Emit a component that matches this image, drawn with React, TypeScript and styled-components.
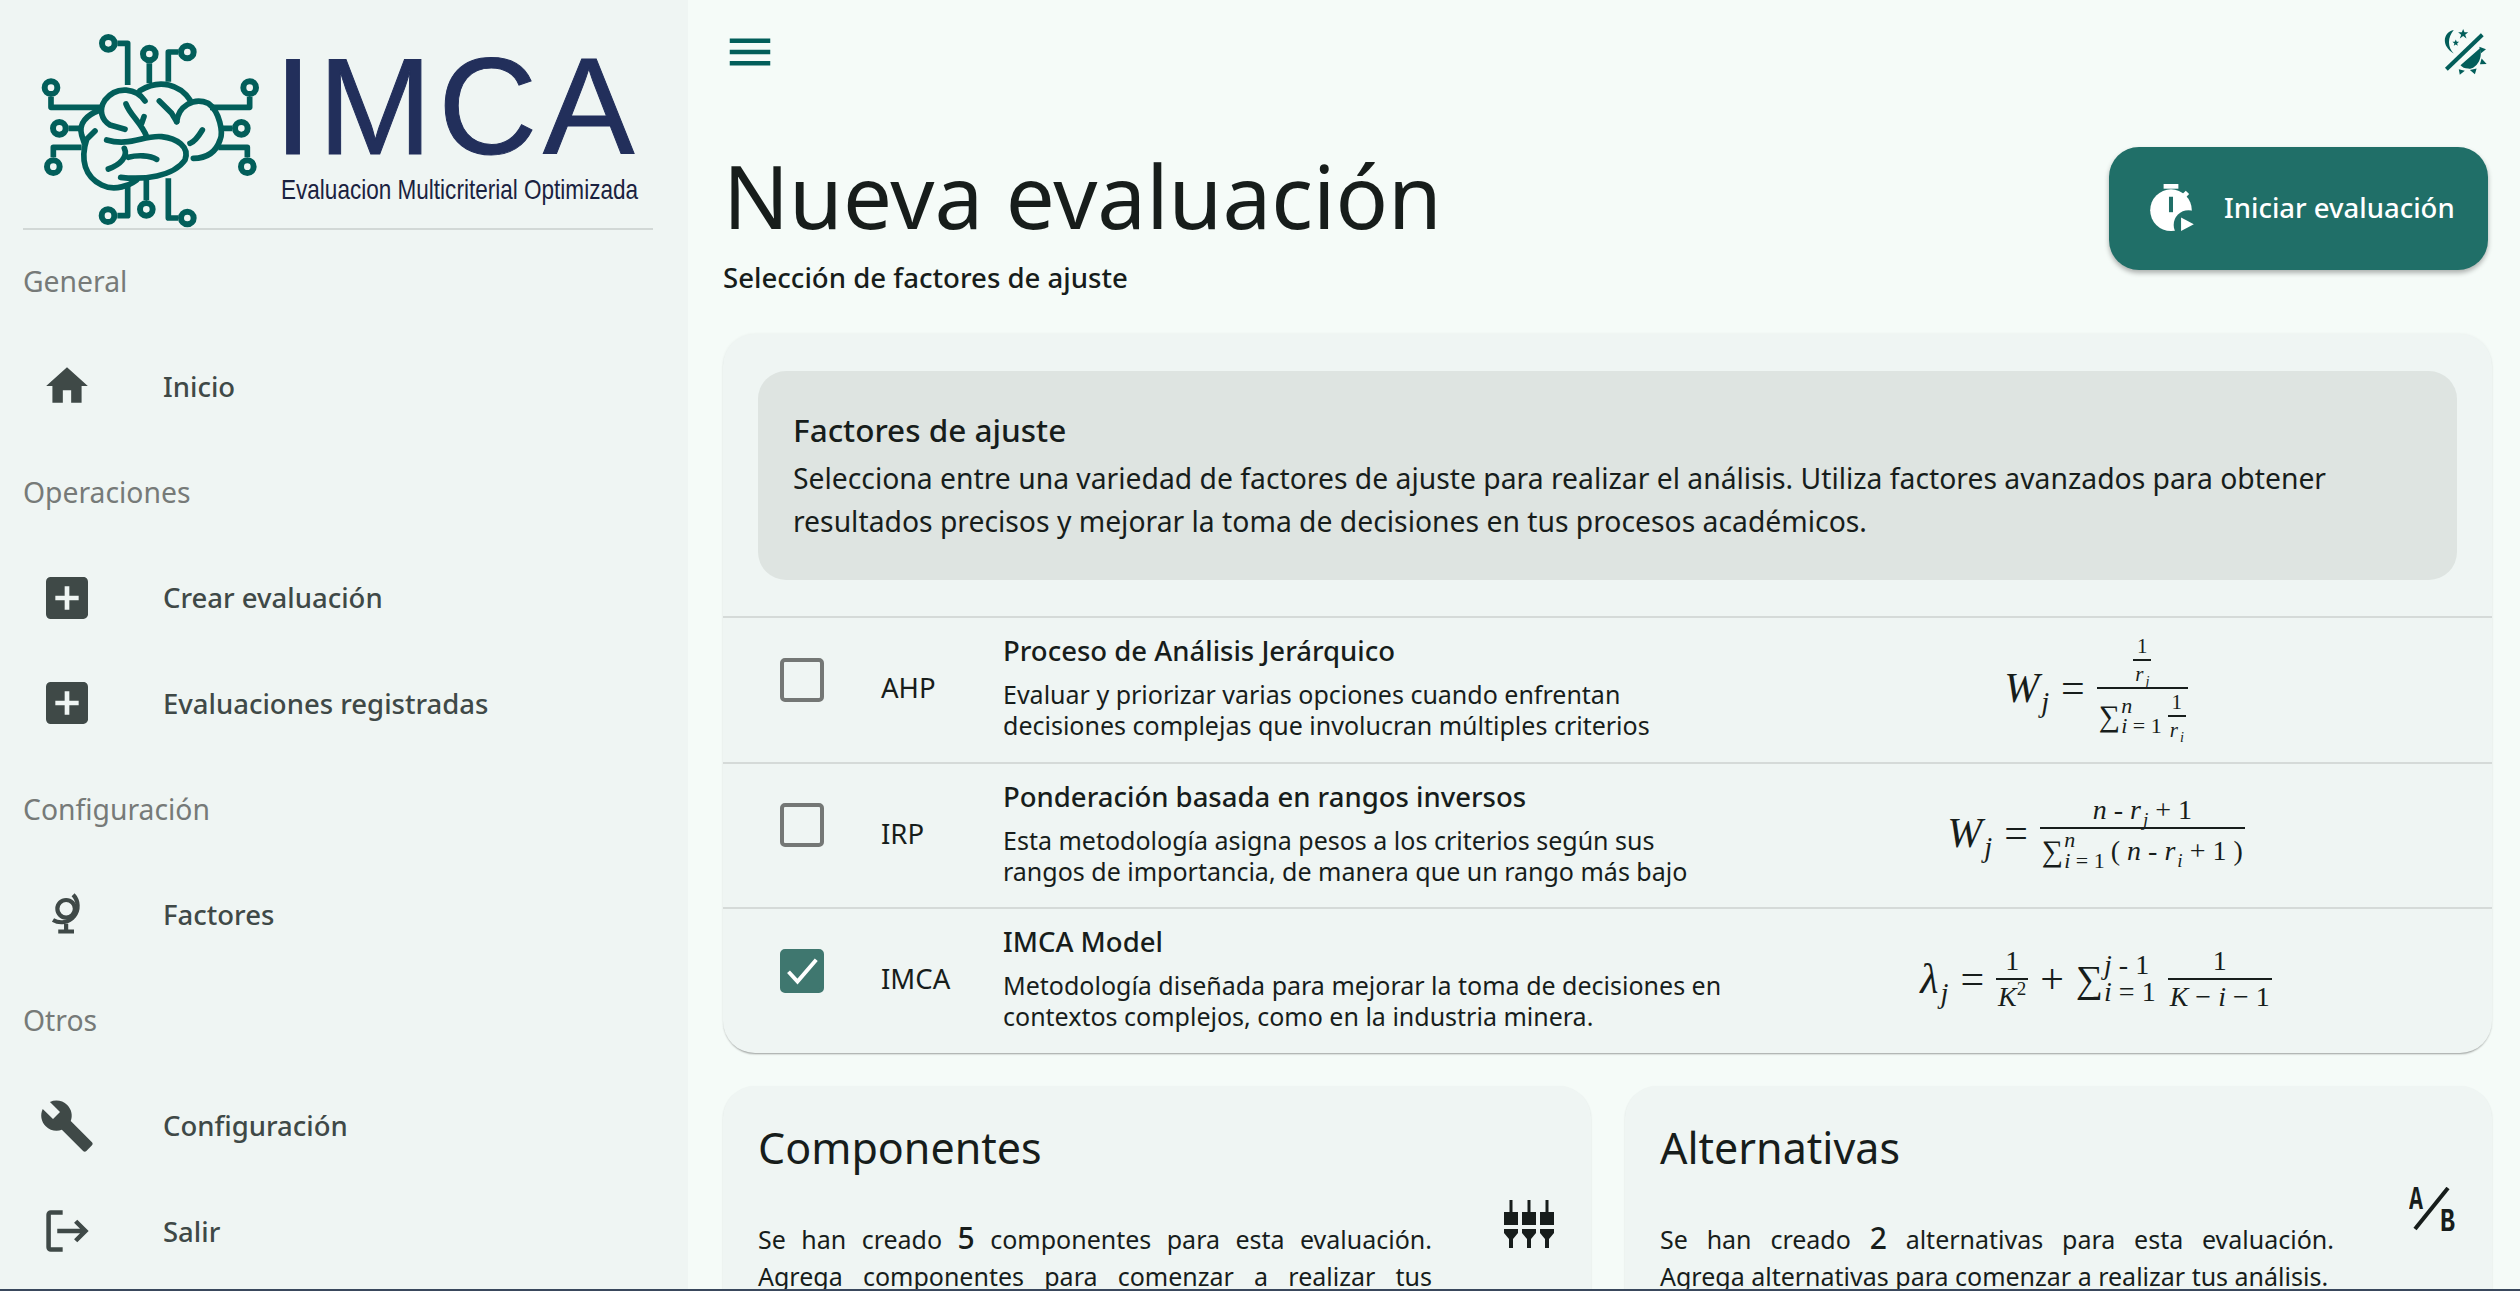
import { ReactNode } from 'react';
import styled, { createGlobalStyle } from 'styled-components';
import { MdAddBox, MdBuild, MdHome, MdMenu } from 'react-icons/md';

const GlobalStyle = createGlobalStyle`
  html, body {
    margin: 0;
    height: 100%;
    overflow: hidden;
    background: #f5fbf8;
    color: #171d1b;
    font-family: "Noto Sans", "Open Sans", sans-serif;
  }
  svg {
    flex-shrink: 0;
  }
`;

const Page = styled.div`
  display: flex;
  flex-direction: column;
  height: 1291px;
`;

const Shell = styled.div`
  flex: 1;
  display: flex;
  min-height: 0;
  overflow: hidden;
`;

const BottomEdge = styled.div`
  height: 2px;
  background: #39475c;
`;

const Sidebar = styled.aside`
  width: 688px;
  flex-shrink: 0;
  box-sizing: border-box;
  padding: 0 35px 0 23px;
  background: #eff5f3;
`;

const LogoRow = styled.div`
  display: flex;
  gap: 7px;
  box-sizing: border-box;
  height: 230px;
  padding: 20px 0 0 7px;
  border-bottom: 2px solid #d2d8d6;
`;

const LogoText = styled.div`
  display: flex;
  flex-direction: column;
  color: #222f5b;
  font-family: "Liberation Sans", Arial, sans-serif;
`;

const LogoTitle = styled.div`
  font-size: 137px;
  line-height: 98px;
  height: 98px;
  margin: 38px 0 0 -3px;
  letter-spacing: 6px;
  white-space: nowrap;
  -webkit-text-stroke: 1px #222f5b;
`;

const LogoSub = styled.div`
  margin: 20px 0 0 4px;
  font-size: 28px;
  line-height: 28px;
  color: #1a2240;
  white-space: nowrap;
  transform: scaleX(0.805);
  transform-origin: left center;
`;

const SectionLabel = styled.div`
  display: flex;
  align-items: center;
  box-sizing: border-box;
  height: 105.6px;
  padding-bottom: 3px;
  font-size: 28.3px;
  color: #767a78;
`;

const NavItem = styled.div`
  display: flex;
  align-items: center;
  box-sizing: border-box;
  height: 105.6px;
  padding: 0 0 4px 23px;
  font-size: 27.5px;
  font-weight: 500;
  color: #3f4947;
`;

const NavIcon = styled.span`
  display: flex;
  align-items: center;
  justify-content: center;
  width: 42px;
  height: 42px;
  margin-right: 75px;
  color: #3f4947;
`;

const Main = styled.main`
  flex: 1;
  min-width: 0;
  padding: 0 28px 0 35px;
`;

const Header = styled.header`
  display: flex;
  align-items: center;
  justify-content: space-between;
  box-sizing: border-box;
  height: 102px;
  padding: 2px 5px 0 0;
  color: #025e5a;
`;

const TitleRow = styled.div`
  display: flex;
  justify-content: space-between;
  align-items: flex-start;
  margin: 43px 0 37px;
`;

const Title = styled.h1`
  margin: 0 0 12px 0;
  font-size: 87px;
  line-height: 100px;
  font-weight: 400;
`;

const Subtitle = styled.div`
  font-size: 27.6px;
  line-height: 40px;
  font-weight: 500;
`;

const StartButton = styled.button`
  display: flex;
  align-items: center;
  gap: 30px;
  box-sizing: border-box;
  width: 379px;
  height: 123px;
  margin: 2px 4px 0 0;
  padding: 0 0 3px 41px;
  border: 0;
  border-radius: 30px;
  background: #206f68;
  color: #fff;
  font-family: inherit;
  font-size: 27.5px;
  font-weight: 500;
  white-space: nowrap;
  box-shadow: 0 3px 5px rgba(0, 0, 0, 0.3);
`;

const Card = styled.section`
  padding-top: 37px;
  height: 719px;
  box-sizing: border-box;
  border-radius: 32px;
  background: #eff5f3;
  box-shadow: 0 2px 2px -1px rgba(0, 0, 0, 0.35), 0 0 3px rgba(0, 0, 0, 0.06);
`;

const InfoBox = styled.div`
  box-sizing: border-box;
  height: 209px;
  margin: 0 35px 36px;
  padding: 39px 35px 0;
  border-radius: 28px;
  background: #dee4e1;
`;

const InfoTitle = styled.div`
  font-size: 31.5px;
  line-height: 40px;
  font-weight: 500;
  margin-bottom: 7px;
`;

const InfoText = styled.div`
  font-size: 28.3px;
  line-height: 43px;
`;

const Row = styled.div`
  display: flex;
  align-items: center;
  box-sizing: border-box;
  height: 145.5px;
  padding: 0 0 4px 57px;
  border-top: 2px solid #d5dad8;
`;

const Check = styled.span<{ $checked?: boolean }>`
  display: flex;
  align-items: center;
  justify-content: center;
  flex-shrink: 0;
  box-sizing: border-box;
  width: 44px;
  height: 44px;
  margin-bottom: 16px;
  border: 4px solid ${(p) => (p.$checked ? '#3f776f' : '#747775')};
  border-radius: 5px;
  background: ${(p) => (p.$checked ? '#3f776f' : 'transparent')};
`;

const RowCode = styled.div`
  width: 122px;
  flex-shrink: 0;
  padding-left: 57px;
  font-size: 27.5px;
`;

const RowText = styled.div`
  width: 730px;
  flex-shrink: 0;
`;

const RowTitle = styled.div`
  font-size: 27.5px;
  line-height: 34px;
  font-weight: 500;
  margin-bottom: 11px;
`;

const RowDesc = styled.div`
  font-size: 25px;
  line-height: 31px;
`;

const FormulaCell = styled.div`
  flex: 1;
  display: flex;
  justify-content: center;
  padding-right: 33px;
`;

const Formula = styled.div`
  display: inline-flex;
  align-items: center;
  gap: 12px;
  font-family: "Liberation Serif", "DejaVu Serif", serif;
  font-size: 42px;
  color: #171d1b;
  white-space: nowrap;
`;

const Var = styled.i``;

const Sub = styled.sub`
  margin-left: 2px;
  font-size: 0.68em;
  line-height: 0;
  vertical-align: -0.35em;
`;

const Sup = styled.sup`
  font-size: 0.68em;
  line-height: 0;
  vertical-align: 0.6em;
`;

const Frac = styled.span<{ $size: number }>`
  display: inline-flex;
  flex-direction: column;
  align-items: center;
  font-size: ${(p) => p.$size}px;
  line-height: 1.15;
`;

const Num = styled.span`
  display: block;
  padding: 0 2px 1px;
  text-align: center;
`;

const Den = styled.span`
  display: flex;
  align-items: center;
  justify-content: center;
  align-self: stretch;
  gap: 6px;
  padding: 1px 2px 0;
  border-top: 2px solid #171d1b;
`;

const SumWrap = styled.span`
  display: inline-flex;
  align-items: center;
  gap: 1px;
`;

const SumSign = styled.span<{ $size: number }>`
  font-size: ${(p) => p.$size}px;
  line-height: 1;
`;

const Limits = styled.span<{ $size: number }>`
  display: inline-flex;
  flex-direction: column;
  align-items: flex-start;
  font-size: ${(p) => p.$size}px;
  line-height: 0.95;
`;

const BottomGrid = styled.div`
  display: grid;
  grid-template-columns: 868px 867px;
  gap: 34px;
  margin-top: 33px;
`;

const SmallCard = styled.section`
  height: 300px;
  box-sizing: border-box;
  padding: 32px 35px 0;
  border-radius: 32px;
  background: #eff5f3;
  box-shadow: 0 1px 2px rgba(0, 0, 0, 0.12);
`;

const SmallTitle = styled.h2`
  margin: 0;
  font-size: 43px;
  line-height: 60px;
  font-weight: 400;
`;

const SmallBody = styled.div`
  display: flex;
  align-items: flex-start;
  margin-top: 9px;
`;

const SmallText = styled.p`
  width: 674px;
  flex-shrink: 0;
  margin: 0;
  padding-top: 34px;
  font-size: 25px;
  line-height: 37px;
  text-align: justify;
`;

const Count = styled.b`
  font-size: 30px;
  font-weight: 500;
  line-height: 1;
`;

const SmallIcon = styled.span<{ $top: number; $left: number }>`
  display: flex;
  margin: ${(p) => p.$top}px 0 0 ${(p) => p.$left}px;
  color: #171d1b;
`;

const BrainLogo = () => (
  <svg width="240" height="220" viewBox="0 0 720 660" fill="none" stroke="#025e5a" strokeWidth="17" strokeLinecap="round" strokeLinejoin="round">
    {[
      [235, 70],
      [358, 102],
      [472, 96],
      [63, 203],
      [88, 325],
      [70, 440],
      [659, 203],
      [634, 325],
      [652, 440],
      [234, 587],
      [349, 568],
      [472, 594],
    ].map(([cx, cy]) => (
      <circle key={`${cx}-${cy}`} cx={cx} cy={cy} r="19" strokeWidth="18" />
    ))}
    <path d="M262 70H293V195M358 130V190M445 96H415V185M63 230V262H210M115 325H150M70 412V382H155M659 230V262H540M607 325H575M652 412V382H565M262 587H293V490M349 540V480M445 594H415V475" strokeLinecap="butt" />
    <path d="M345 243C320 205 260 195 225 240C205 270 215 300 240 315L285 328" />
    <path d="M330 212C390 175 450 195 480 240" />
    <path d="M440 305C445 260 490 230 535 250C570 275 580 340 570 360C555 405 520 415 490 415" />
    <path d="M210 270C170 285 145 310 155 345L165 375M195 333L170 358C150 420 165 470 215 495C255 515 300 495 320 480" />
    <path d="M272 472C340 480 430 470 465 420C480 380 440 355 395 350C340 345 300 380 230 360" />
    <path d="M288 252C300 285 335 310 350 350M342 290L335 310M388 243L425 280L440 305M517 330C505 350 495 365 480 370" />
    <path d="M283 385C295 410 270 435 235 447M295 412C320 405 360 405 380 418" />
  </svg>
);

const GlobeIcon = () => (
  <svg width="42" height="42" viewBox="0 0 24 24" fill="none" stroke="currentColor" strokeWidth="2.4">
    <circle cx="11.500" cy="9" r="5" />
    <path d="M15.500 1A9.300 9.300 0 0 1 4 15.400" />
    <path d="M11.500 17.500V21M7 22H16" />
  </svg>
);

const LogoutIcon = () => (
  <svg width="52" height="52" viewBox="0 0 24 24" fill="none" stroke="currentColor" strokeWidth="2.1">
    <path d="M10 3.500H4.500A1 1 0 0 0 3.500 4.500V19.500A1 1 0 0 0 4.500 20.500H10" />
    <path d="M7.500 12H20.500M16 7.500L20.500 12L16 16.500" />
  </svg>
);

const ThemeIcon = () => (
  <svg width="46" height="46" viewBox="0 0 135 137" fill="currentColor">
    <path d="M37 3C10 8-6 45 37 73C18 55 18 25 37 3Z" />
    <path d="M65 0L69 10L80 10L71 17L75 28L65 21L55 28L59 17L50 10L61 10Z" />
    <path d="M43 31L46 38L53 38L47 43L49 50L43 46L37 50L39 43L33 38L40 38Z" />
    <path d="M15 120L122 17" stroke="currentColor" strokeWidth="12" />
    <path d="M57 108L115 57C125 85 105 120 80 118C70 118 62 114 57 108Z" />
    <path d="M113 53L133 60L118 72ZM120 88L135 104L115 105ZM85 122L105 118L100 135ZM52 120L70 124L55 136Z" />
  </svg>
);

const TimerIcon = () => (
  <svg width="44" height="47" viewBox="0 0 130 140">
    <rect x="40" y="0" width="44" height="14" fill="#fff" />
    <path d="M96 30L106 20L116 30L106 40Z" fill="#fff" />
    <circle cx="62" cy="78" r="62" fill="#fff" />
    <rect x="56" y="38" width="12" height="46" fill="#206f68" />
    <circle cx="114" cy="122" r="44" fill="#206f68" />
    <path d="M92 100L130 120L92 140Z" fill="#fff" />
  </svg>
);

const FaderIcon = () => (
  <svg width="50" height="48" viewBox="0 0 50 48" fill="currentColor">
    {[7, 25, 43].map((x) => (
      <path
        key={x}
        d="M-1.500 0H1.500V12H7V25H-7V12H-1.500ZM-7 29H7V33L2 39V48H-2V39L-7 33Z"
        transform={`translate(${x} 0)`}
      />
    ))}
  </svg>
);

const AbIcon = () => (
  <svg width="46" height="45" viewBox="0 0 46 45">
    <path d="M39 1L6 42" stroke="currentColor" strokeWidth="4" />
    <text x="0" y="22" fontFamily="'Liberation Mono', monospace" fontWeight="700" fontSize="33" textLength="14" lengthAdjust="spacingAndGlyphs" fill="currentColor">A</text>
    <text x="31" y="44" fontFamily="'Liberation Mono', monospace" fontWeight="700" fontSize="33" textLength="15" lengthAdjust="spacingAndGlyphs" fill="currentColor">B</text>
  </svg>
);

const CheckMark = () => (
  <svg width="36" height="36" viewBox="0 0 24 24" fill="none" stroke="#fff" strokeWidth="2.6">
    <path d="M3 12.500L9 19L21.500 4.500" />
  </svg>
);

const Sum = ({ size, limit, top, bottom }: { size: number; limit: number; top: ReactNode; bottom: ReactNode }) => (
  <SumWrap>
    <SumSign $size={size}>∑</SumSign>
    <Limits $size={limit}>
      <span>{top}</span>
      <span>{bottom}</span>
    </Limits>
  </SumWrap>
);

const factors = [
  {
    code: 'AHP',
    title: 'Proceso de Análisis Jerárquico',
    lines: ['Evaluar y priorizar varias opciones cuando enfrentan', 'decisiones complejas que involucran múltiples criterios'],
    formula: (
      <Formula>
        <span><Var>W</Var><Sub><Var>j</Var></Sub></span>
        <span>=</span>
        <Frac $size={23}>
          <Num>
            <Frac $size={21}>
              <Num>1</Num>
              <Den><span><Var>r</Var><Sub><Var>j</Var></Sub></span></Den>
            </Frac>
          </Num>
          <Den>
            <Sum size={30} limit={22} top={<Var>n</Var>} bottom={<><Var>i</Var> = 1</>} />
            <Frac $size={21}>
              <Num>1</Num>
              <Den><span><Var>r</Var><Sub><Var>i</Var></Sub></span></Den>
            </Frac>
          </Den>
        </Frac>
      </Formula>
    ),
  },
  {
    code: 'IRP',
    title: 'Ponderación basada en rangos inversos',
    lines: ['Esta metodología asigna pesos a los criterios según sus', 'rangos de importancia, de manera que un rango más bajo'],
    formula: (
      <Formula>
        <span><Var>W</Var><Sub><Var>j</Var></Sub></span>
        <span>=</span>
        <Frac $size={28}>
          <Num><Var>n</Var> - <Var>r</Var><Sub><Var>j</Var></Sub> + 1</Num>
          <Den>
            <Sum size={30} limit={22} top={<Var>n</Var>} bottom={<><Var>i</Var> = 1</>} />
            <span>( <Var>n</Var> - <Var>r</Var><Sub><Var>i</Var></Sub> + 1 )</span>
          </Den>
        </Frac>
      </Formula>
    ),
  },
  {
    code: 'IMCA',
    title: 'IMCA Model',
    lines: ['Metodología diseñada para mejorar la toma de decisiones en', 'contextos complejos, como en la industria minera.'],
    checked: true,
    formula: (
      <Formula>
        <span><Var>λ</Var><Sub><Var>j</Var></Sub></span>
        <span>=</span>
        <Frac $size={28}>
          <Num>1</Num>
          <Den><span><Var>K</Var><Sup>2</Sup></span></Den>
        </Frac>
        <span>+</span>
        <Sum size={38} limit={28} top={<><Var>j</Var> - 1</>} bottom={<><Var>i</Var> = 1</>} />
        <Frac $size={28}>
          <Num>1</Num>
          <Den><span><Var>K</Var> − <Var>i</Var> − 1</span></Den>
        </Frac>
      </Formula>
    ),
  },
];

export default function App() {
  return (
    <>
      <GlobalStyle />
      <Page>
        <Shell>
          <Sidebar>
            <LogoRow>
              <BrainLogo />
              <LogoText>
                <LogoTitle>IMCA</LogoTitle>
                <LogoSub>Evaluacion Multicriterial Optimizada</LogoSub>
              </LogoText>
            </LogoRow>
            <SectionLabel>General</SectionLabel>
            <NavItem><NavIcon><MdHome size={50} /></NavIcon>Inicio</NavItem>
            <SectionLabel>Operaciones</SectionLabel>
            <NavItem><NavIcon><MdAddBox size={56} /></NavIcon>Crear evaluación</NavItem>
            <NavItem><NavIcon><MdAddBox size={56} /></NavIcon>Evaluaciones registradas</NavItem>
            <SectionLabel>Configuración</SectionLabel>
            <NavItem><NavIcon><GlobeIcon /></NavIcon>Factores</NavItem>
            <SectionLabel>Otros</SectionLabel>
            <NavItem><NavIcon><MdBuild size={56} /></NavIcon>Configuración</NavItem>
            <NavItem><NavIcon><LogoutIcon /></NavIcon>Salir</NavItem>
          </Sidebar>
          <Main>
            <Header>
              <MdMenu size={54} />
              <ThemeIcon />
            </Header>
            <TitleRow>
              <div>
                <Title>Nueva evaluación</Title>
                <Subtitle>Selección de factores de ajuste</Subtitle>
              </div>
              <StartButton><TimerIcon />Iniciar evaluación</StartButton>
            </TitleRow>
            <Card>
              <InfoBox>
                <InfoTitle>Factores de ajuste</InfoTitle>
                <InfoText>
                  Selecciona entre una variedad de factores de ajuste para realizar el análisis. Utiliza factores avanzados para obtener
                  <br />
                  resultados precisos y mejorar la toma de decisiones en tus procesos académicos.
                </InfoText>
              </InfoBox>
              {factors.map((f) => (
                <Row key={f.code}>
                  <Check $checked={f.checked}>{f.checked && <CheckMark />}</Check>
                  <RowCode>{f.code}</RowCode>
                  <RowText>
                    <RowTitle>{f.title}</RowTitle>
                    <RowDesc>{f.lines[0]}<br />{f.lines[1]}</RowDesc>
                  </RowText>
                  <FormulaCell>{f.formula}</FormulaCell>
                </Row>
              ))}
            </Card>
            <BottomGrid>
              <SmallCard>
                <SmallTitle>Componentes</SmallTitle>
                <SmallBody>
                  <SmallText>Se han creado <Count>5</Count> componentes para esta evaluación. Agrega componentes para comenzar a realizar tus análisis.</SmallText>
                  <SmallIcon $top={13} $left={72}><FaderIcon /></SmallIcon>
                </SmallBody>
              </SmallCard>
              <SmallCard>
                <SmallTitle>Alternativas</SmallTitle>
                <SmallBody>
                  <SmallText>Se han creado <Count>2</Count> alternativas para esta evaluación. Agrega alternativas para comenzar a realizar tus análisis.</SmallText>
                  <SmallIcon $top={0} $left={75}><AbIcon /></SmallIcon>
                </SmallBody>
              </SmallCard>
            </BottomGrid>
          </Main>
        </Shell>
        <BottomEdge />
      </Page>
    </>
  );
}
